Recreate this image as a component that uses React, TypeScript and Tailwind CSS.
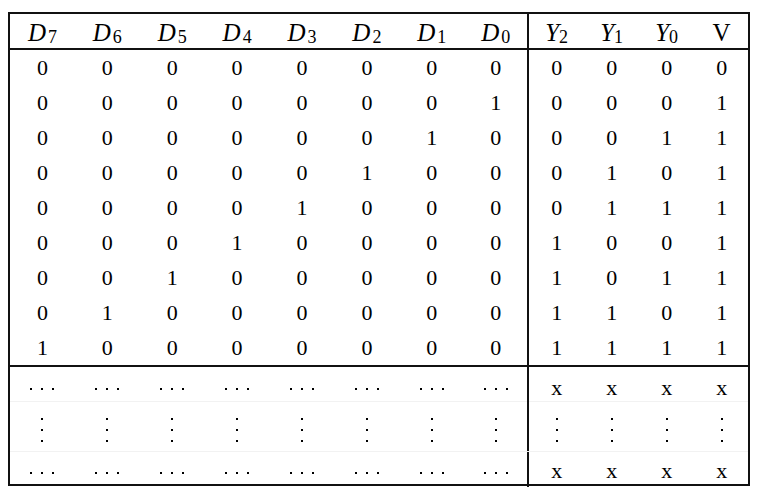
import React from "react";

const rows = [
  "00000000 0000",
  "00000001 0001",
  "00000010 0011",
  "00000100 0101",
  "00001000 0111",
  "00010000 1001",
  "00100000 1011",
  "01000000 1101",
  "10000000 1111",
];

const grid =
  "grid grid-cols-[repeat(8,64.9px)_repeat(4,55px)] items-center";

const Dot = () => <span className="block w-[2px] h-[2px] bg-black" />;

const HDots = () => (
  <div className="flex justify-center gap-[9px] pt-[6px]">
    <Dot />
    <Dot />
    <Dot />
  </div>
);

const VDots = () => (
  <div className="flex flex-col items-center gap-[9px] pt-[6px]">
    <Dot />
    <Dot />
    <Dot />
  </div>
);

const Cell = ({ children, right }: { children: React.ReactNode; right?: boolean }) => (
  <div
    className={`h-full flex items-center justify-center ${
      right ? "border-r-2 border-[#111]" : ""
    }`}
  >
    {children}
  </div>
);

export default function App() {
  const heads = ["7", "6", "5", "4", "3", "2", "1", "0"];

  return (
    <div className="w-[757px] h-[495px] bg-white pl-[8px] pt-[12px] font-['Liberation_Serif',serif] text-black">
      <div className="w-[742px] border-2 border-[#111]">
        {/* cabecera */}
        <div className={`${grid} h-[36px] border-b-2 border-[#111] text-[25px]`}>
          {heads.map((h, i) => (
            <Cell key={h} right={i === 7}>
              <span className="italic pr-[2px]">D</span>
              <span className="text-[18px] mt-[9px]">{h}</span>
            </Cell>
          ))}
          {["2", "1", "0"].map((h) => (
            <Cell key={"y" + h}>
              <span className="italic">Y</span>
              <span className="text-[18px] mt-[9px]">{h}</span>
            </Cell>
          ))}
          <Cell>V</Cell>
        </div>

        {/* filas de la tabla de verdad */}
        <div className="border-b-2 border-[#111] text-[22px]">
          {rows.map((r, ri) => {
            const chars = r.replace(" ", "").split("");
            return (
              <div key={ri} className={`${grid} h-[35px]`}>
                {chars.map((c, i) => (
                  <Cell key={i} right={i === 7}>
                    {c}
                  </Cell>
                ))}
              </div>
            );
          })}
        </div>

        {/* filas sin importancia */}
        <div className="text-[22px]">
          <div className={`${grid} h-[35px] border-b border-[#f2f2f2]`}>
            {Array.from({ length: 8 }).map((_, i) => (
              <Cell key={i} right={i === 7}>
                <HDots />
              </Cell>
            ))}
            {Array.from({ length: 4 }).map((_, i) => (
              <Cell key={"x" + i}>
                <span className="pt-[4px]">x</span>
              </Cell>
            ))}
          </div>
          <div className={`${grid} h-[50px] border-b border-[#f2f2f2]`}>
            {Array.from({ length: 12 }).map((_, i) => (
              <Cell key={i} right={i === 7}>
                <VDots />
              </Cell>
            ))}
          </div>
          <div className={`${grid} h-[32px]`}>
            {Array.from({ length: 8 }).map((_, i) => (
              <Cell key={i} right={i === 7}>
                <HDots />
              </Cell>
            ))}
            {Array.from({ length: 4 }).map((_, i) => (
              <Cell key={"x" + i}>
                <span className="pt-[2px]">x</span>
              </Cell>
            ))}
          </div>
        </div>
      </div>
    </div>
  );
}
